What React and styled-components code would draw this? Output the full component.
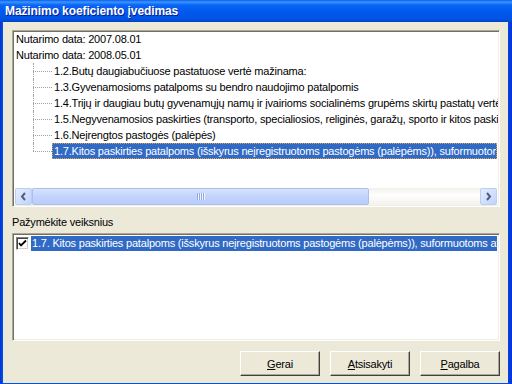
import React from 'react'
import styled, { createGlobalStyle } from 'styled-components'

const Global = createGlobalStyle`
  html, body {
    margin: 0;
    padding: 0;
    background: #fff;
  }
  body {
    font-family: 'Liberation Sans', Arial, sans-serif;
    font-size: 11px;
    letter-spacing: -0.2px;
  }
`

// Outer window frame (blue XP border)
const Window = styled.div`
  width: 512px;
  height: 384px;
  display: flex;
  flex-direction: column;
  background: linear-gradient(90deg, #0831d9 0, #0054e3 3px, #0054e3 505px, #0831d9 512px);
  box-sizing: border-box;
`

const TitleBar = styled.div`
  height: 22px;
  flex: none;
  display: flex;
  align-items: center;
  padding-left: 5px;
  color: #fff;
  font-family: 'Liberation Sans', Arial, sans-serif;
  font-weight: bold;
  font-size: 12px;
  letter-spacing: -0.1px;
  text-shadow: 1px 1px #0a1e8c;
  background: linear-gradient(180deg, #0a5ef0 0, #3d95ff 2px, #0a66f5 5px, #0058ee 12px, #0054e3 19px, #0041c8 22px);
`

const Body = styled.div`
  flex: 1;
  margin: 0 4px 4px 3px;
  background: #ece9d8;
  padding: 8px 8px 7px 9px;
  display: flex;
  flex-direction: column;
`

// Sunken 3D box used by tree and list
const Sunken = styled.div`
  box-sizing: border-box;
  background: #fff;
  border-top: 1px solid #aca899;
  border-left: 1px solid #aca899;
  border-right: 1px solid #fff;
  border-bottom: 1px solid #fff;
  box-shadow: inset 1px 1px 0 #716f64, inset -1px -1px 0 #f1efe2;
  padding: ${p => p.$pad};
  display: flex;
  flex-direction: column;
  overflow: hidden;
  height: ${p => p.$h}px;
`

const TreeArea = styled.div`
  flex: 1;
  overflow: hidden;
  padding-right: 1px;
`

const Row = styled.div`
  height: 16px;
  display: flex;
  align-items: center;
  white-space: nowrap;
  padding-left: ${p => p.$indent}px;
`

// dotted tree connector
const Connector = styled.div`
  position: relative;
  width: 19px;
  height: 16px;
  flex: none;
  &::before {
    content: '';
    position: absolute;
    left: 0;
    top: 0;
    height: ${p => (p.$last ? '8px' : '16px')};
    border-left: 1px dotted #a0a0a0;
  }
  &::after {
    content: '';
    position: absolute;
    left: 0;
    top: 8px;
    width: 19px;
    border-top: 1px dotted #a0a0a0;
  }
`

const Label = styled.span`
  display: inline-block;
  padding: 1px;
  line-height: 12px;
  color: ${p => (p.$sel ? '#fff' : '#000')};
  background: ${p => (p.$sel ? '#316ac5' : 'transparent')};
  border: 1px ${p => (p.$sel ? 'dotted #e0a040' : 'solid transparent')};
  flex: ${p => (p.$sel ? '1' : 'none')};
  overflow: hidden;
`

// XP horizontal scrollbar
const HScroll = styled.div`
  height: 17px;
  flex: none;
  display: flex;
  margin: 0 1px 1px 1px;
  background: linear-gradient(180deg, #f3f1ec, #fefefe 40%, #f3f1ec);
`

const ArrowBtn = styled.div`
  width: 17px;
  height: 17px;
  box-sizing: border-box;
  border: 1px solid #b9cdfa;
  border-radius: 2px;
  background: linear-gradient(135deg, #e5edfd, #c1d3fb);
  display: flex;
  align-items: center;
  justify-content: center;
`

const Thumb = styled.div`
  width: ${p => p.$w}px;
  height: 17px;
  box-sizing: border-box;
  border: 1px solid #a9bff4;
  border-radius: 2px;
  background: linear-gradient(180deg, #d7e3fd, #c2d4fc 50%, #b8cdfb);
  display: flex;
  align-items: center;
  justify-content: center;
`

const Grip = styled.div`
  width: 8px;
  height: 7px;
  background: repeating-linear-gradient(90deg, #8ea9ec 0 1px, #eef3fe 1px 2px);
`

const Track = styled.div`
  flex: 1;
`

const Caption = styled.div`
  margin: 9px 0 4px 0;
  line-height: 13px;
  color: #000;
`

const CheckRow = styled.div`
  display: flex;
  align-items: center;
  height: 15px;
  padding-left: 1px;
  white-space: nowrap;
`

const CheckBox = styled.div`
  width: 13px;
  height: 13px;
  flex: none;
  box-sizing: border-box;
  border-top: 1px solid #808080;
  border-left: 1px solid #808080;
  border-right: 1px solid #fff;
  border-bottom: 1px solid #fff;
  box-shadow: inset 1px 1px 0 #404040, inset -1px -1px 0 #d4d0c8;
  background: #fff;
  display: flex;
  align-items: center;
  justify-content: center;
  margin-right: 2px;
`

const CheckLabel = styled.span`
  flex: 1;
  background: #316ac5;
  color: #fff;
  line-height: 15px;
  padding-left: 1px;
  overflow: hidden;
`

const ButtonBar = styled.div`
  margin-top: 10px;
  display: flex;
  justify-content: flex-end;
  gap: 10px;
`

const Button = styled.div`
  width: 80px;
  height: 25px;
  box-sizing: border-box;
  background: #ece9d8;
  border-top: 1px solid #fff;
  border-left: 1px solid #fff;
  border-right: 1px solid #404040;
  border-bottom: 1px solid #404040;
  box-shadow: inset -1px -1px 0 #aca899;
  display: flex;
  align-items: center;
  justify-content: center;
  color: #000;
  u { text-decoration: underline; }
`

const rows = [
  { text: '1.2.Butų daugiabučiuose pastatuose vertė mažinama:' },
  { text: '1.3.Gyvenamosioms patalpoms su bendro naudojimo patalpomis' },
  { text: '1.4.Trijų ir daugiau butų gyvenamųjų namų ir įvairioms socialinėms grupėms skirtų pastatų vertė mažinama' },
  { text: '1.5.Negyvenamosios paskirties (transporto, specialiosios, religinės, garažų, sporto ir kitos paskirties)' },
  { text: '1.6.Neįrengtos pastogės (palėpės)' },
  { text: '1.7.Kitos paskirties patalpoms (išskyrus neįregistruotoms pastogėms (palėpėms)), suformuotoms atskirai', sel: true },
]

const Chevron = ({ dir }) => (
  <svg width="7" height="9" viewBox="0 0 7 9">
    <path
      d={dir === 'left' ? 'M5 1 L2 4.5 L5 8' : 'M2 1 L5 4.5 L2 8'}
      fill="none"
      stroke="#4d6185"
      strokeWidth="2"
    />
  </svg>
)

const Check = () => (
  <svg width="9" height="9" viewBox="0 0 9 9">
    <path d="M1 4 L3 6.5 L8 1.5" fill="none" stroke="#000" strokeWidth="1.8" />
  </svg>
)

export default function App() {
  return (
    <>
      <Global />
      <Window>
        <TitleBar>Mažinimo koeficiento įvedimas</TitleBar>
        <Body>
          <Sunken $h={177} $pad="0 1px 0 1px">
            <TreeArea>
              <Row $indent={0}><Label>Nutarimo data: 2007.08.01</Label></Row>
              <Row $indent={0}><Label>Nutarimo data: 2008.05.01</Label></Row>
              {rows.map((r, i) => (
                <Row key={i} $indent={19}>
                  <Connector $last={i === rows.length - 1} />
                  <Label $sel={r.sel}>{r.text}</Label>
                </Row>
              ))}
            </TreeArea>
            <HScroll>
              <ArrowBtn><Chevron dir="left" /></ArrowBtn>
              <Thumb $w={337}><Grip /></Thumb>
              <Track />
              <ArrowBtn><Chevron dir="right" /></ArrowBtn>
            </HScroll>
          </Sunken>
          <Caption>Pažymėkite veiksnius</Caption>
          <Sunken $h={108} $pad="2px">
            <CheckRow>
              <CheckBox><Check /></CheckBox>
              <CheckLabel>1.7. Kitos paskirties patalpoms (išskyrus neįregistruotoms pastogėms (palėpėms)), suformuotoms atskirai</CheckLabel>
            </CheckRow>
          </Sunken>
          <ButtonBar>
            <Button><span><u>G</u>erai</span></Button>
            <Button><span><u>A</u>tsisakyti</span></Button>
            <Button><span><u>P</u>agalba</span></Button>
          </ButtonBar>
        </Body>
      </Window>
    </>
  )
}
